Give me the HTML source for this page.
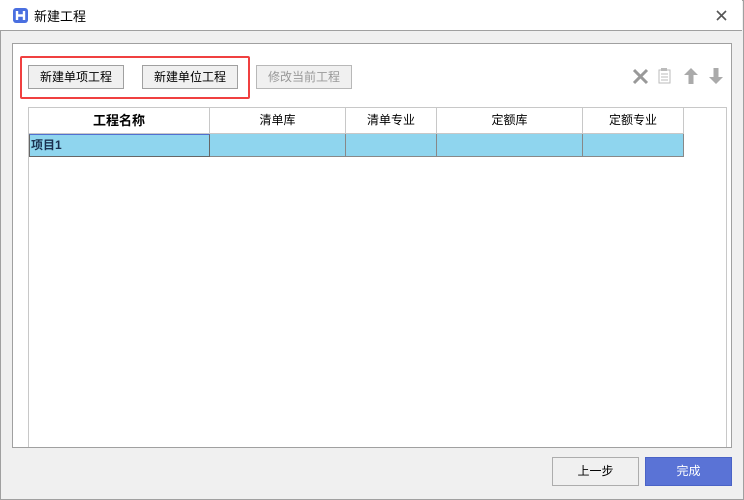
<!DOCTYPE html><html><head><meta charset="utf-8"><style>
*{margin:0;padding:0;box-sizing:border-box}
body{width:744px;height:500px;position:relative;background:#f0f0f0;font-family:"Liberation Sans","Noto Sans CJK SC",sans-serif;font-size:12px;color:#000;overflow:hidden}
.win{position:absolute;left:0;top:0;width:744px;height:500px;border:1px solid #a0a0a0}
.title{position:absolute;left:0;top:0;width:742px;height:31px;background:#fff;border-bottom:1px solid #a0a0a0}
.abs{position:absolute}
.btn{position:absolute;height:24px;border:1px solid #a0a0a0;background:#f0f0f0;text-align:center;line-height:22px;font-size:12px}
.th,.td{position:absolute;border-right:1px solid #c8c8c8;text-align:center}
.th{top:108px;height:26px;line-height:25px;border-bottom:1px solid #c8c8c8}
.td{top:134px;height:23px;background:#8fd5ee;border-right:1px solid #888;border-bottom:1px solid #888}
</style></head><body>
<div class="win"></div>
<div class="title">
<svg class="abs" style="left:13px;top:8px" width="15" height="15"><rect width="15" height="15" rx="3" fill="#4a6fe0"/><path d="M4 3v9M11 3v9M4 7.5h7" stroke="#fff" stroke-width="2.4"/></svg>
<div class="abs" style="left:34px;top:6px;font-size:13px">新建工程</div>
<svg class="abs" style="left:716px;top:10px" width="11" height="11"><path d="M1 1l9 9M10 1l-9 9" stroke="#555" stroke-width="1.6"/></svg>
</div>
<div class="abs" style="left:12px;top:43px;width:720px;height:405px;background:#fff;border:1px solid #a0a0a0"></div>
<div class="abs" style="left:20px;top:56px;width:230px;height:43px;border:2px solid #f04040;border-radius:2px"></div>
<div class="btn" style="left:28px;top:65px;width:96px">新建单项工程</div>
<div class="btn" style="left:142px;top:65px;width:96px">新建单位工程</div>
<div class="btn" style="left:256px;top:65px;width:96px;color:#999;border-color:#b8b8b8">修改当前工程</div>
<svg class="abs" style="left:632px;top:67px" width="92" height="18">
<path d="M2 3l13 13M15 3l-13 13" stroke="#999" stroke-width="3"/>
<rect x="27" y="3" width="11" height="13" fill="none" stroke="#bbb"/><rect x="29" y="1" width="6" height="3" fill="#bbb"/><path d="M29 7h7M29 10h7M29 13h7" stroke="#bbb"/>
<path d="M59 1l-7 7h4.5v9h5v-9h4.5z" fill="#aaa"/>
<path d="M84 17l-7-7h4.5V1h5v9h4.5z" fill="#aaa"/>
</svg>
<div class="abs" style="left:28px;top:107px;width:699px;height:340px;border:1px solid #c8c8c8;border-bottom:none"></div>
<div class="th" style="left:29px;width:181px;font-weight:bold;font-size:13px">工程名称</div>
<div class="th" style="left:210px;width:136px">清单库</div>
<div class="th" style="left:346px;width:91px">清单专业</div>
<div class="th" style="left:437px;width:146px">定额库</div>
<div class="th" style="left:583px;width:101px">定额专业</div>
<div class="td" style="left:29px;width:181px;text-align:left;padding-left:1px;font-weight:bold;color:#1a3050;border:1px solid #666;border-top:1px solid #5070d0;line-height:20px;font-size:12px">项目1</div>
<div class="td" style="left:210px;width:136px"></div>
<div class="td" style="left:346px;width:91px"></div>
<div class="td" style="left:437px;width:146px"></div>
<div class="td" style="left:583px;width:101px"></div>
<div class="btn" style="left:552px;top:457px;width:87px;height:29px;line-height:27px;border-color:#adadad">上一步</div>
<div class="btn" style="left:645px;top:457px;width:87px;height:29px;line-height:27px;background:#5a73d6;border-color:#4a63c6;color:#fff">完成</div>
</body></html>
